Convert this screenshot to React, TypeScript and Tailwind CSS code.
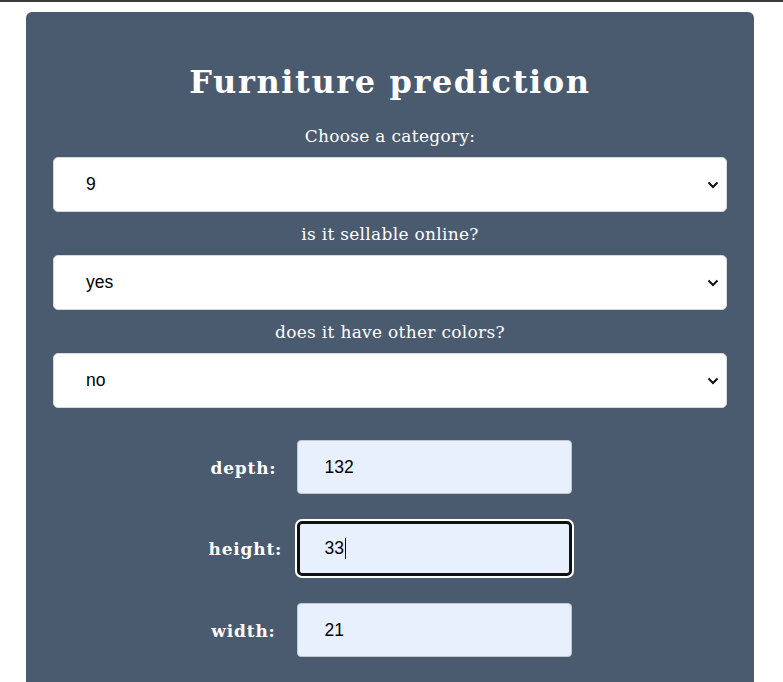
import React from "react";

const serif = "font-['DejaVu_Serif','Liberation_Serif',serif]";
const sans = "font-['Liberation_Sans',Arial,sans-serif]";

function Chevron() {
  return (
    <svg width="12" height="8" viewBox="0 0 12 8" className="shrink-0">
      <path d="M1.5 1.5 L6 6 L10.5 1.5" fill="none" stroke="#111" strokeWidth="2" />
    </svg>
  );
}

function SelectBox({ value }: { value: string }) {
  return (
    <div
      className={`flex h-[55px] w-full items-center justify-between rounded-[5px] border border-[#d9d9d9] bg-white pl-[32px] pr-[7px] text-[17.5px] text-black ${sans}`}
    >
      <span>{value}</span>
      <Chevron />
    </div>
  );
}

function FieldLabel({ children }: { children: React.ReactNode }) {
  return (
    <div className={`text-center text-[17px] leading-[22px] tracking-[0.3px] text-white ${serif}`}>
      {children}
    </div>
  );
}

function NumberRow({ label, value, focused }: { label: string; value: string; focused?: boolean }) {
  return (
    <div className="flex items-center justify-center gap-[18px]">
      <div className={`w-[70px] pt-[3px] text-center text-[17px] font-bold tracking-[0.8px] text-white ${serif}`}>
        {label}
      </div>
      <div
        className={
          focused
            ? `flex h-[55px] w-[275px] items-center rounded-[5px] border-[3px] border-[#111] bg-[#e8f0fe] pl-[25px] text-[17.5px] text-black outline-2 outline-white ${sans}`
            : `flex h-[54px] w-[275px] items-center rounded-[4px] border border-[#c4c7cc] bg-[#e8f0fe] pl-[27px] text-[17.5px] text-black ${sans}`
        }
      >
        <span>{value}</span>
        {focused && <span className="ml-[1px] inline-block h-[21px] w-[1px] bg-black" />}
      </div>
    </div>
  );
}

export default function App() {
  return (
    <div className="min-h-[682px] bg-white">
      <div className="h-[2px] w-full bg-[#3a3a3a]" />
      <div className="ml-[26px] mt-[10px] w-[728px] rounded-t-[6px] bg-[#4a5b70] px-[27px] pb-[40px] pt-[50px]">
        <h1 className={`text-center text-[32px] font-bold leading-[40px] tracking-[1.6px] text-white ${serif}`}>
          Furniture prediction
        </h1>
        <div className="mt-[23px]">
          <FieldLabel>Choose a category:</FieldLabel>
          <div className="mt-[10px]">
            <SelectBox value="9" />
          </div>
        </div>
        <div className="mt-[11px]">
          <FieldLabel>is it sellable online?</FieldLabel>
          <div className="mt-[10px]">
            <SelectBox value="yes" />
          </div>
        </div>
        <div className="mt-[11px]">
          <FieldLabel>does it have other colors?</FieldLabel>
          <div className="mt-[10px]">
            <SelectBox value="no" />
          </div>
        </div>
        <div className="mt-[32px] flex flex-col gap-[27px]">
          <NumberRow label="depth:" value="132" />
          <NumberRow label="height:" value="33" focused />
          <NumberRow label="width:" value="21" />
        </div>
      </div>
    </div>
  );
}
